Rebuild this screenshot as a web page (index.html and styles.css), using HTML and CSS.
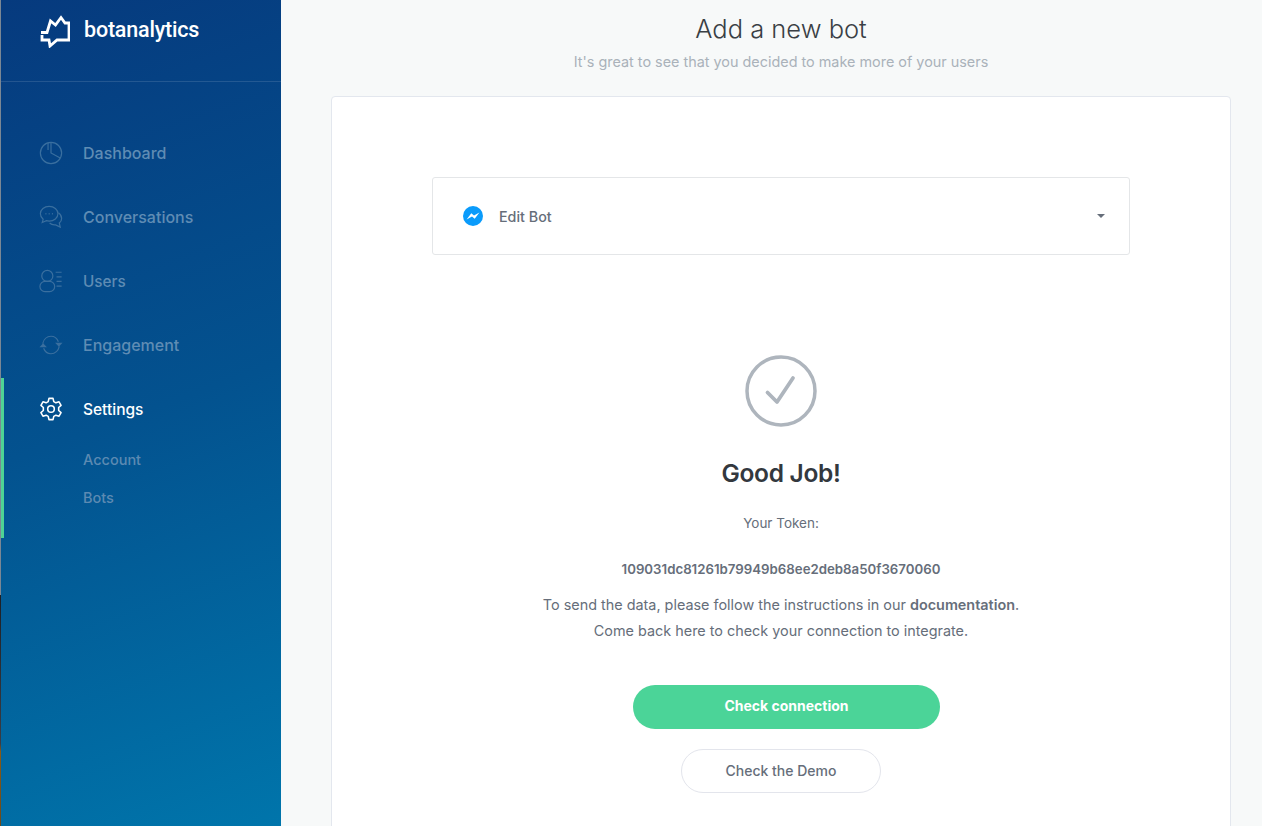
FILE: index.html
```html
<!DOCTYPE html>
<html lang="en">
<head>
<meta charset="utf-8">
<title>Add a new bot</title>
<link rel="stylesheet" href="styles.css">
</head>
<body>
<div class="app">
  <div class="edge"></div>
  <aside class="sidebar">
    <div class="brand">
      <svg class="logo" width="30" height="33" viewBox="0 0 30 33" fill="none" stroke="#fff" stroke-width="2.800" stroke-linejoin="miter" stroke-linecap="butt">
        <path d="M2 20V25H9L10 31L17 25H29V8H25L21 2.500L15.500 10L10.500 6L7 17.500H1"/>
      </svg>
      <span class="brand-name">botanalytics</span>
    </div>
    <nav class="nav">
      <a class="nav-item">
        <svg class="nav-icon" viewBox="0 0 26 26" fill="none" stroke="currentColor" stroke-width="1.300"><circle cx="13" cy="13" r="11.500"/><path d="M13 1.500V13L23 18.500"/><path d="M9.800 2V9.800"/></svg>
        <span>Dashboard</span>
      </a>
      <a class="nav-item">
        <svg class="nav-icon" viewBox="0 0 26 26" fill="none" stroke="currentColor" stroke-width="1.300"><path d="M11 1.500C5.700 1.500 1.500 5 1.500 9.500C1.500 12 2.700 14 4.500 15.500L3.500 19L8 17C9 17.300 10 17.500 11 17.500C16.300 17.500 20.500 14 20.500 9.500C20.500 5 16.300 1.500 11 1.500Z"/><path d="M21 8.500C23.300 10 24.500 12 24.500 14.500C24.500 16.500 23.500 18.300 22 19.500L23 24L18 21.500C15.500 21.800 13 21 11.500 19.500"/><path d="M7 9.500H8M10.500 9.500H11.500M14 9.500H15" stroke-width="1.500"/></svg>
        <span>Conversations</span>
      </a>
      <a class="nav-item">
        <svg class="nav-icon" viewBox="0 0 26 26" fill="none" stroke="currentColor" stroke-width="1.300"><circle cx="9" cy="7.500" r="6"/><rect x="1" y="13.500" width="16" height="11" rx="5.500"/><path d="M18 3.500H24.500M19 8.500H24.500M19 13.500H24.500M19 18.500H24.500"/></svg>
        <span class="nav-tight">Users</span>
      </a>
      <a class="nav-item">
        <svg class="nav-icon" viewBox="0 0 26 26" fill="none" stroke="currentColor" stroke-width="1.300"><path d="M4 11.500C5 7 8.500 3.500 13 3.500C16.500 3.500 19.500 5.500 21 9.500"/><path d="M22 14.500C21 19 17.500 22.500 13 22.500C9.500 22.500 6.500 20.500 5 16.500"/><path d="M17.500 10.500H25.500L21.500 15Z" fill="currentColor" stroke="none"/><path d="M0.500 15.500H8.500L4.500 11Z" fill="currentColor" stroke="none"/></svg>
        <span>Engagement</span>
      </a>
      <div class="nav-group">
        <a class="nav-item nav-item-active">
          <svg class="nav-icon" viewBox="0 0 26 26" fill="none" stroke="currentColor" stroke-width="1.700" stroke-linejoin="round"><path d="M10.800 1.500H15.200L16 5L18.300 6.300L21.700 5.200L23.900 9L21.300 11.400V14.600L23.900 17L21.700 20.800L18.300 19.700L16 21L15.200 24.500H10.800L10 21L7.700 19.700L4.300 20.800L2.100 17L4.700 14.600V11.400L2.100 9L4.300 5.200L7.700 6.300L10 5Z"/><circle cx="13" cy="13" r="3.600"/></svg>
          <span>Settings</span>
        </a>
        <a class="nav-sub nav-sub-first">Account</a>
        <a class="nav-sub">Bots</a>
      </div>
    </nav>
  </aside>
  <main class="main">
    <header class="page-head">
      <h1 class="page-title">Add a new bot</h1>
      <p class="page-sub">It's great to see that you decided to make more of your users</p>
    </header>
    <section class="card">
      <div class="select">
        <svg class="messenger" width="20" height="20" viewBox="0 0 20 20"><circle cx="10" cy="10" r="10" fill="#0a9bfb"/><path d="M3.600 13.400L8.300 7.200L11 9.500L16.400 6.600L11.700 12.800L9 10.500Z" fill="#fff"/></svg>
        <span class="select-label">Edit Bot</span>
        <span class="caret"></span>
      </div>
      <div class="result">
        <svg class="check" width="72" height="72" viewBox="0 0 72 72" fill="none" stroke="#aeb5bd"><circle cx="36" cy="36" r="34" stroke-width="3.500"/><path d="M22.500 37.500L32 47L48 23" stroke-width="3.800" stroke-linecap="round" stroke-linejoin="round"/></svg>
        <h2 class="result-title">Good Job!</h2>
        <p class="token-label">Your Token:</p>
        <p class="token">109031dc81261b79949b68ee2deb8a50f3670060</p>
        <p class="help">To send the data, please follow the instructions in our <b>documentation</b>.<br>Come back here to check your connection to integrate.</p>
        <a class="btn-primary">Check connection</a>
        <a class="btn-ghost">Check the Demo</a>
      </div>
    </section>
  </main>
</div>
</body>
</html>
```
FILE: styles.css
```css
* { box-sizing: border-box; }
html, body { margin: 0; height: 100%; overflow: hidden; }
body {
  background: #f7f9f9;
  font-family: Inter, "Noto Sans", "Liberation Sans", sans-serif;
  color: #666e7a;
}
.app { display: flex; height: 826px; overflow: hidden; }
.edge {
  width: 1px;
  flex: none;
  background: linear-gradient(180deg, #7b8794 0, #7b8794 72%, #1d2026 72%, #3a3d45 90%, #8a5a14 91%, #6b4a1c 100%);
}
.sidebar {
  width: 280px;
  flex: none;
  background: linear-gradient(160deg, #063a7e 0%, #03528f 50%, #0075ab 100%);
  display: flex;
  flex-direction: column;
}
.brand {
  height: 82px;
  flex: none;
  border-bottom: 1px solid rgba(255, 255, 255, .12);
  display: flex;
  align-items: flex-start;
  padding: 15px 0 0 39px;
  gap: 14px;
}
.brand-name {
  font-family: Roboto, sans-serif;
  font-size: 21.500px;
  font-weight: 500;
  line-height: 30px;
  color: #fff;
  letter-spacing: -.2px;
}
.nav { display: flex; flex-direction: column; padding-top: 40px; }
.nav-item {
  display: flex;
  align-items: center;
  height: 64px;
  padding: 0 0 2px 38px;
  gap: 20px;
  font-size: 16px;
  font-weight: 500;
  color: #5f8cb4;
}
.nav-tight { font-size: 15.300px; }
.nav-icon { width: 24px; height: 24px; flex: none; color: #3a6f9f; }
.nav-group {
  border-left: 3px solid #4fd395;
  height: 160px;
}
.nav-group .nav-item { padding-left: 35px; }
.nav-item-active, .nav-group .nav-item-active { color: #fff; font-size: 15.500px; }
.nav-item-active .nav-icon { color: #fff; }
.nav-sub {
  display: block;
  padding-left: 79px;
  font-size: 14.500px;
  font-weight: 500;
  line-height: 38px;
  color: #5c8ab2;
}
.nav-sub-first { margin-top: -1px; }
.main {
  flex: 1;
  min-width: 0;
  padding: 0 31px 0 50px;
}
.page-head { text-align: center; height: 96px; padding-top: 13px; }
.page-title {
  margin: 0;
  font-size: 25.500px;
  font-weight: 300;
  line-height: 32px;
  color: #3a3f45;
}
.page-sub {
  margin: 8px 0 0;
  font-size: 14.400px;
  line-height: 18px;
  color: #aab2ba;
}
.card {
  background: #fff;
  border: 1px solid #e3e7ee;
  border-radius: 4px 4px 0 0;
  height: 760px;
  padding: 80px 100px 0;
}
.select {
  height: 78px;
  border: 1px solid #e4e6e8;
  border-radius: 3px;
  display: flex;
  align-items: center;
  padding: 0 24px 0 30px;
}
.select-label {
  margin-left: 16px;
  font-size: 14.300px;
  font-weight: 500;
  flex: 1;
  padding-top: 1px;
}
.caret {
  width: 0;
  height: 0;
  border-left: 4px solid transparent;
  border-right: 4px solid transparent;
  border-top: 4px solid #666e7a;
}
.result {
  display: flex;
  flex-direction: column;
  align-items: center;
  padding-top: 100px;
}
.check { display: block; }
.result-title {
  margin: 28px 0 0;
  font-size: 24.500px;
  font-weight: 600;
  line-height: 36px;
  color: #33383e;
  letter-spacing: -.3px;
}
.token-label { margin: 22px 0 0; font-size: 13.500px; line-height: 20px; }
.token { margin: 26px 0 0; font-size: 13.250px; font-weight: 600; line-height: 20px; }
.help { margin: 13px 0 0; font-size: 14.400px; line-height: 26px; text-align: center; }
.help b { font-weight: 600; }
.btn-primary {
  margin: 41px 0 0 11px;
  width: 307px;
  height: 44px;
  border-radius: 22px;
  background: #4bd498;
  color: #fff;
  font-size: 14px;
  font-weight: 700;
  display: flex;
  align-items: center;
  justify-content: center;
  padding-bottom: 4px;
}
.btn-ghost {
  margin-top: 20px;
  width: 200px;
  height: 44px;
  border-radius: 22px;
  border: 1px solid #e3e5ec;
  font-size: 14px;
  font-weight: 500;
  display: flex;
  align-items: center;
  justify-content: center;
  padding-bottom: 2px;
}
```
